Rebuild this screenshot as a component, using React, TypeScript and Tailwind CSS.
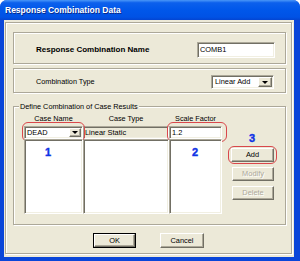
import React from "react";

const etched = "border border-[#ACA899] shadow-[inset_1px_1px_0_#fff,1px_1px_0_#fff]";
const sunken =
  "border border-t-[#ACA899] border-l-[#ACA899] border-b-white border-r-white shadow-[inset_1px_1px_0_#716F64,inset_-1px_-1px_0_#F1EFE2]";
const raised =
  "border border-t-white border-l-white border-b-[#716F64] border-r-[#716F64] shadow-[inset_-1px_-1px_0_#ACA899]";

const Arrow = ({ w }: { w: string }) => (
  <div className={`${raised} ${w} h-full bg-[#ECE9D8] flex items-center justify-center`}>
    <div className="w-0 h-0 border-x-[3px] border-x-transparent border-t-[3px] border-t-black" />
  </div>
);

const Button = ({
  label,
  disabled,
  isDefault,
  className,
}: {
  label: string;
  disabled?: boolean;
  isDefault?: boolean;
  className?: string;
}) => (
  <div className={`${isDefault ? "border border-black" : ""} ${className ?? ""}`}>
    <div
      className={`${raised} h-full bg-[#ECE9D8] flex items-center justify-center text-[7.4px] leading-none ${
        disabled ? "text-[#ACA899] [text-shadow:1px_1px_0_#fff]" : "text-black"
      }`}
    >
      {label}
    </div>
  </div>
);

const Mark = ({ className }: { className: string }) => (
  <div className={`absolute rounded-[6px] border border-[#D9474B] ${className}`} />
);

const Num = ({ n, className }: { n: string; className: string }) => (
  <span
    className={`absolute text-[11px] leading-none font-bold text-[#1034E6] [-webkit-text-stroke:0.4px_#1034E6] ${className}`}
  >
    {n}
  </span>
);

export default function App() {
  return (
    <div className="w-[300px] h-[261px] flex flex-col bg-[#0A46D9] rounded-t-[7px] overflow-hidden font-['Liberation_Sans',Arial,sans-serif] text-black">
      {/* title bar */}
      <div className="h-[20px] shrink-0 flex items-center px-[5px] bg-[linear-gradient(180deg,#4A97F8_0%,#0C60EC_14%,#0057EA_50%,#0052E5_85%,#0345D2_100%)]">
        <span className="text-white font-bold text-[8.5px] leading-none [text-shadow:1px_1px_0_#0A2A8A]">
          Response Combination Data
        </span>
      </div>

      <div className="flex-1 flex ml-[4px] mr-[6px] mb-[4px] bg-[#ECE9D8] pt-[2px] pl-[1px] pr-[2px] pb-[3px]">
        <div className={`${etched} flex-1 flex flex-col pl-[7px] pr-[5px] pt-[9px]`}>
          {/* name */}
          <div className={`${etched} h-[32px] shrink-0 flex items-center justify-between pl-[22px] pr-[10px] pt-[3px]`}>
            <span className="font-bold text-[8px] leading-none mt-[1px]">Response Combination Name</span>
            <div className={`${sunken} w-[78px] h-[16px] bg-white flex items-center px-[2px] text-[7.4px] leading-none`}>
              COMB1
            </div>
          </div>

          {/* type */}
          <div className={`${etched} mt-[4px] h-[25px] shrink-0 flex items-center justify-between pl-[22px] pr-[11px] pt-[3px]`}>
            <span className="text-[7.3px] leading-none">Combination Type</span>
            <div className={`${sunken} w-[63px] h-[14px] bg-white flex items-center p-[1px]`}>
              <span className="flex-1 pl-[2px] text-[7.4px] leading-none">Linear Add</span>
              <Arrow w="w-[14px]" />
            </div>
          </div>

          {/* define */}
          <div className={`${etched} relative mt-[13px] h-[119px] shrink-0 flex pt-[7px] pl-[10px]`}>
            <span className="absolute left-[5px] top-[-5px] px-[1px] bg-[#ECE9D8] text-[7.3px] leading-[10px]">
              Define Combination of Case Results
            </span>

            <div className="flex">
              <div className="w-[59px] flex flex-col">
                <div className="h-[10px] text-center text-[7.3px] leading-[10px]">Case Name</div>
                <div className={`${sunken} relative mt-[2px] h-[13px] bg-white flex items-center p-[1px]`}>
                  <span className="flex-1 pl-[1px] text-[7.4px] leading-none">DEAD</span>
                  <Arrow w="w-[12px]" />
                  <Mark className="left-[-3px] right-[-3px] top-[-5px] bottom-[-4px]" />
                </div>
                <div className={`${sunken} relative h-[75px] bg-white`}>
                  <Num n="1" className="left-[20px] top-[7px]" />
                </div>
              </div>

              <div className="w-[86px] flex flex-col">
                <div className="h-[10px] text-center text-[7.3px] leading-[10px]">Case Type</div>
                <div className={`${sunken} mt-[2px] h-[13px] bg-[#ECE9D8] flex items-center px-[1px] text-[7.4px] leading-none`}>
                  Linear Static
                </div>
                <div className={`${sunken} h-[75px] bg-white`} />
              </div>

              <div className="w-[53px] flex flex-col">
                <div className="h-[10px] text-center text-[7.3px] leading-[10px]">Scale Factor</div>
                <div className={`${sunken} relative mt-[2px] h-[13px] bg-white flex items-center px-[2px] text-[7.4px] leading-none`}>
                  1.2
                  <Mark className="left-[-3px] right-[-6px] top-[-5px] bottom-[-4px]" />
                </div>
                <div className={`${sunken} relative h-[75px] bg-white`}>
                  <Num n="2" className="left-[22px] top-[7px]" />
                </div>
              </div>
            </div>

            <div className="ml-[9px] w-[43px] flex flex-col">
              <div className="relative mt-[34px]">
                <Num n="3" className="left-[18px] top-[-15px]" />
                <Button label="Add" className="h-[14px]" />
                <Mark className="left-[-3px] right-[-3px] top-[-2px] bottom-[-2px]" />
              </div>
              <Button label="Modify" disabled className="mt-[5px] ml-[1px] h-[14px]" />
              <Button label="Delete" disabled className="mt-[5px] ml-[1px] h-[14px]" />
            </div>
          </div>

          {/* ok / cancel */}
          <div className="mt-[8px] flex pl-[80px] gap-[24px]">
            <Button label="OK" isDefault className="w-[43px] h-[15px]" />
            <Button label="Cancel" className="w-[44px] h-[15px]" />
          </div>
        </div>
      </div>
    </div>
  );
}
